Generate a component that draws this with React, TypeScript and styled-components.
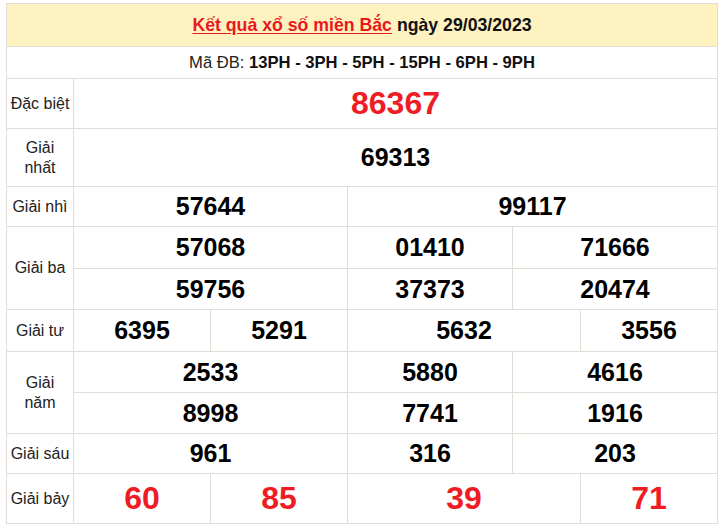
import React from "react";
import styled, { createGlobalStyle } from "styled-components";

const Global = createGlobalStyle`
  html, body { margin: 0; padding: 0; background: #fff; }
  body { font-family: "Liberation Sans", Arial, sans-serif; }
`;

const Page = styled.div`
  padding: 3px 0 0 6px;
`;

const Table = styled.div`
  display: grid;
  width: 712px;
  box-sizing: border-box;
  padding: 1px;
  gap: 1px;
  background: #e2ddd6;
  grid-template-columns: 66px 136px 136px 164px 67px 136px;
  grid-template-rows: 42px 31px 49px 57px 39px 41px 40px 41px 40px 40px 39px 49px;
`;

const Header = styled.div`
  grid-column: 1 / -1;
  background: #fff2c1;
  display: flex;
  align-items: center;
  justify-content: center;
  font-size: 17.7px;
  font-weight: bold;
  color: #111;
  white-space: nowrap;
`;

const TitleLink = styled.a`
  color: #ea1820;
  text-decoration: underline;
  text-underline-offset: 2px;
  margin-right: 0.28em;
`;

const CodeRow = styled.div`
  grid-column: 1 / -1;
  background: #fff;
  display: flex;
  align-items: center;
  justify-content: center;
  font-size: 16.6px;
  color: #222;
  white-space: pre;
`;

const Bold = styled.b`
  color: #111;
`;

const Label = styled.div<{ $rows?: number }>`
  grid-row: span ${(p) => p.$rows ?? 1};
  background: #fff;
  display: flex;
  align-items: center;
  justify-content: center;
  text-align: center;
  padding: 0 2px;
  font-size: 16px;
  line-height: 20px;
  color: #222;
`;

const Num = styled.div<{ $span?: number; $red?: boolean; $size?: number }>`
  grid-column: span ${(p) => p.$span ?? 1};
  background: #fff;
  display: flex;
  align-items: center;
  justify-content: center;
  font-weight: bold;
  font-size: ${(p) => p.$size ?? 25}px;
  color: ${(p) => (p.$red ? "#ee1c25" : "#000")};
`;

type Cell = [string, number];

const Row = ({ cells, red, size }: { cells: Cell[]; red?: boolean; size?: number }) => (
  <>
    {cells.map(([v, s], i) => (
      <Num key={i} $span={s} $red={red} $size={size}>
        {v}
      </Num>
    ))}
  </>
);

export default function App() {
  return (
    <Page>
      <Global />
      <Table>
        <Header>
          <TitleLink>Kết quả xổ số miền Bắc</TitleLink>
          ngày 29/03/2023
        </Header>
        <CodeRow>
          {"Mã ĐB: "}
          <Bold>13PH - 3PH - 5PH - 15PH - 6PH - 9PH</Bold>
        </CodeRow>

        <Label>Đặc biệt</Label>
        <Row cells={[["86367", 5]]} red size={32} />

        <Label>Giải nhất</Label>
        <Row cells={[["69313", 5]]} />

        <Label>Giải nhì</Label>
        <Row cells={[["57644", 2], ["99117", 3]]} />

        <Label $rows={2}>Giải ba</Label>
        <Row cells={[["57068", 2], ["01410", 1], ["71666", 2]]} />
        <Row cells={[["59756", 2], ["37373", 1], ["20474", 2]]} />

        <Label>Giải tư</Label>
        <Row cells={[["6395", 1], ["5291", 1], ["5632", 2], ["3556", 1]]} />

        <Label $rows={2}>Giải năm</Label>
        <Row cells={[["2533", 2], ["5880", 1], ["4616", 2]]} />
        <Row cells={[["8998", 2], ["7741", 1], ["1916", 2]]} />

        <Label>Giải sáu</Label>
        <Row cells={[["961", 2], ["316", 1], ["203", 2]]} />

        <Label>Giải bảy</Label>
        <Row cells={[["60", 1], ["85", 1], ["39", 2], ["71", 1]]} red size={32} />
      </Table>
    </Page>
  );
}
